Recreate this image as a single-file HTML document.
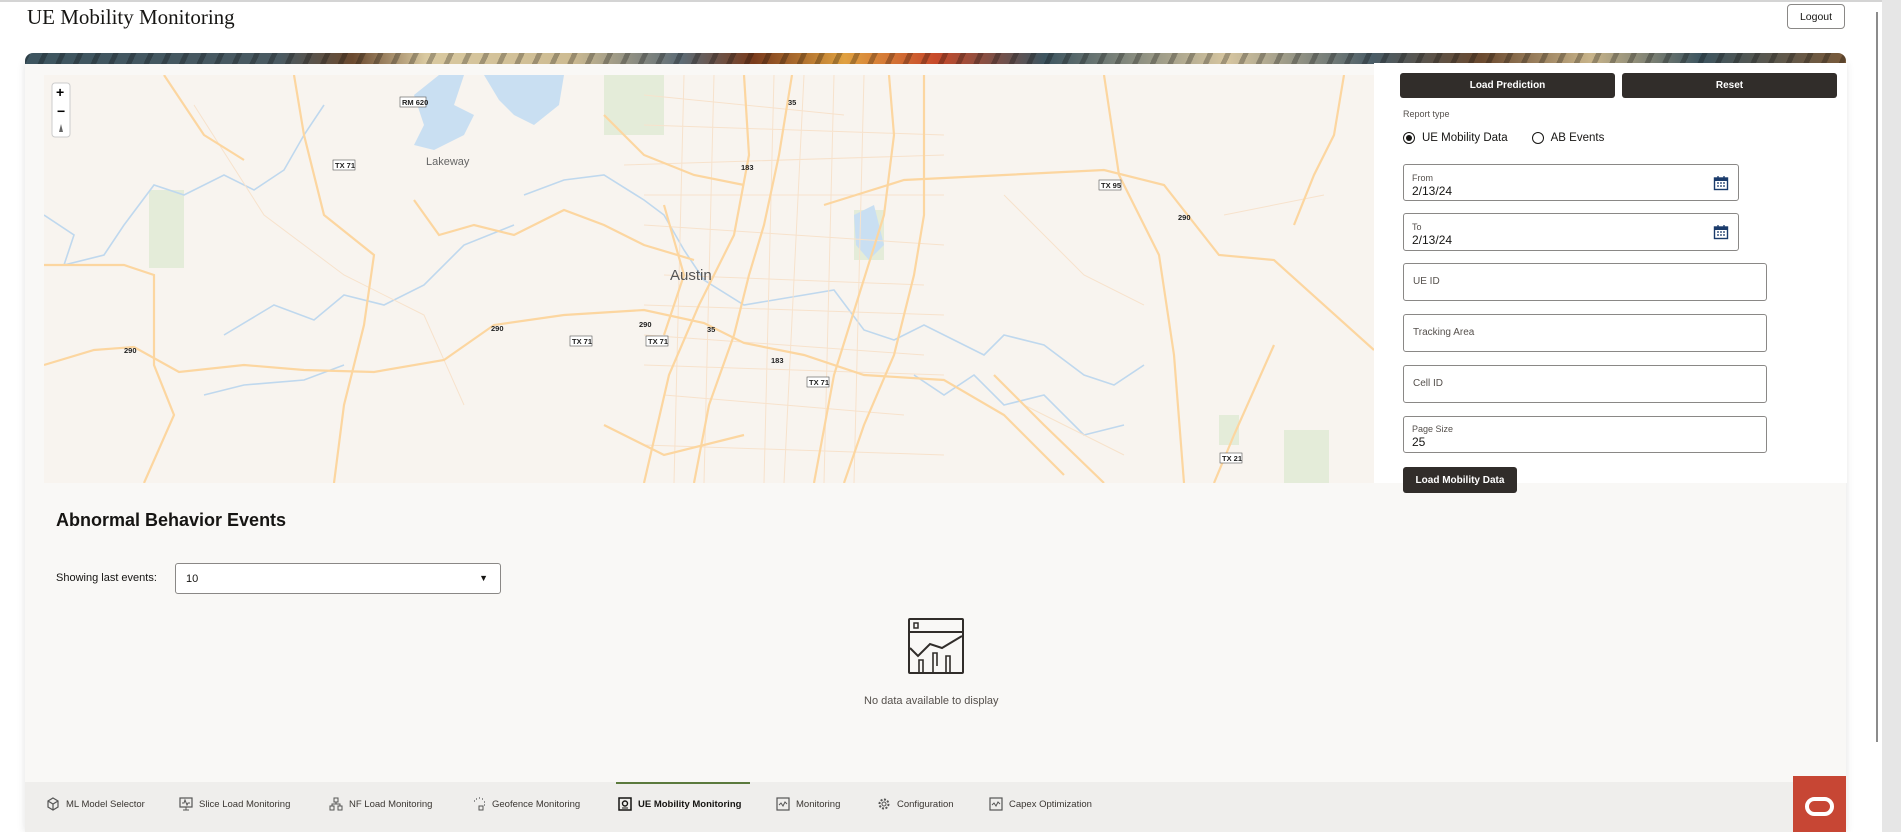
<!DOCTYPE html>
<html><head><meta charset="utf-8">
<style>
*{box-sizing:border-box;margin:0;padding:0}
body{width:1901px;height:832px;overflow:hidden;background:#fff;font-family:"Liberation Sans",sans-serif;position:relative;color:#161513}
.abs{position:absolute}
.title{left:27px;top:5px;font-family:"Liberation Serif",serif;font-size:21px;color:#161513}
.logout{left:1787px;top:4px;width:58px;height:25px;border:1px solid #8a8886;border-radius:4px;font-size:10.5px;display:flex;align-items:center;justify-content:center;background:#fff}
.banner{left:25px;top:53px;width:1821px;height:11px;border-radius:8px 8px 0 0;overflow:hidden;background:linear-gradient(90deg,#3d5560 0,#4a5a62 14%,#6b4a2f 18%,#d9c9a0 22%,#cdbb92 30%,#5d6c76 36%,#7a3b1c 40%,#e0a140 45%,#c84a2a 50%,#3d5560 56%,#d7c6a0 66%,#4a5d67 74%,#6b4a2f 80%,#c8b48a 86%,#3d5560 92%,#7a5a3a 100%)}
.banner:after{content:"";position:absolute;inset:0;background:repeating-linear-gradient(115deg,rgba(0,0,0,.25) 0 5px,transparent 5px 16px)}
.card{left:25px;top:63px;width:1821px;height:769px;background:#f9f8f6;box-shadow:0 0 8px rgba(0,0,0,.12)}
.rp{left:1374px;top:63px;width:473px;height:420px;background:#fff}
.btn{background:#312d2a;color:#fff;font-size:10px;font-weight:bold;display:flex;align-items:center;justify-content:center;border-radius:3px}
.fld{left:1403px;border:1px solid #8a8886;border-radius:3px;background:#fff}
.fld .l{position:absolute;left:8px;font-size:9px;color:#55504c}
.fld .v{position:absolute;left:8px;font-size:12px;color:#161513}
.fld .p{position:absolute;left:9px;top:12px;font-size:10px;color:#55504c}
.nav{left:25px;top:782px;width:1821px;height:50px;background:#efeeec}
.ni{position:absolute;top:797px;font-size:9.5px;color:#3a3632;display:flex;align-items:center;gap:6px}
.ni svg{width:14px;height:14px}
</style></head><body>
<div class="abs" style="left:0;top:0;width:1882px;height:2px;background:#d4d4d4"></div>
<div class="abs" style="left:1882px;top:0;width:19px;height:832px;background:#e6e6e6"></div>
<div class="abs" style="left:1876px;top:12px;width:2px;height:730px;background:#8c8c8c"></div>
<div class="abs title">UE Mobility Monitoring</div>
<div class="abs logout">Logout</div>
<div class="abs card"></div>
<div class="abs banner"></div>
<svg class="abs" style="left:44px;top:75px" width="1330" height="408" viewBox="0 0 1330 408">
<rect width="1330" height="408" fill="#f8f4ef"/>
<g fill="#e4ecd9"><rect x="105" y="115" width="35" height="78"/><rect x="560" y="0" width="60" height="60"/><rect x="810" y="135" width="30" height="50"/><rect x="1240" y="355" width="45" height="53"/><rect x="1175" y="340" width="20" height="30"/></g>
<g fill="#c9dff2"><path d="M370 20 L395 0 L420 0 L410 30 L430 40 L420 60 L390 75 L370 70 L380 50 Z"/><path d="M440 0 L520 0 L515 30 L490 50 L470 40 L455 25 Z"/><path d="M810 140 L830 130 L840 170 L825 185 L812 170 Z"/></g>
<g fill="none" stroke="#bfd8ee" stroke-width="1.6"><path d="M0 140 L30 160 L20 190 L60 180 L80 150 L110 110 L140 120 L180 100 L210 115 L240 95 L260 60 L280 30"/><path d="M480 120 L520 105 L560 100 L600 125 L620 140 L640 175 L660 205 L700 230 L730 225 L760 220 L790 215 L820 255 L850 265 L880 250 L920 270 L940 280 L960 260 L1000 270 L1040 300 L1070 310 L1100 290"/><path d="M180 260 L230 230 L270 245 L300 220 L340 230 L380 210 L420 170 L470 150"/><path d="M160 320 L200 310 L260 305 L300 290"/><path d="M870 300 L900 320 L930 300 L960 330 L1000 320 L1040 360 L1080 350"/></g>
<g fill="none" stroke="#f7e2cc" stroke-width="1"><path d="M600 20 L800 40 M580 90 L900 80 M600 150 L900 170 M620 200 L880 210 M600 260 L880 280 M620 320 L860 340 M760 0 L740 408 M790 0 L780 408 M820 0 L810 408 M640 0 L630 408 M670 0 L660 408 M730 0 L720 408 M600 50 L900 60 M600 120 L900 120 M600 230 L900 240 M600 290 L900 300 M600 370 L900 380"/><path d="M150 30 L220 140 L300 200 L380 240 L420 330 M960 120 L1040 200 L1100 230 M1180 140 L1280 120 M980 330 L1080 380"/></g>
<g fill="none" stroke="#fcd6a0" stroke-width="2.2"><path d="M748 0 L735 80 L720 150 L705 200 L690 260 L665 330 L650 408"/><path d="M700 0 L705 80 L690 160 L655 230 L625 300 L600 408"/><path d="M845 0 L850 60 L840 140 L815 220 L790 300 L770 408"/><path d="M0 290 L50 275 L90 272 L135 297 L200 290 L260 295 L330 297 L400 285 L450 250 L520 240 L600 235 L660 248 L700 268 L760 280 L820 300 L900 305 L960 340 L1020 400"/><path d="M780 130 L860 105 L1060 95 L1120 110 L1175 180 L1230 185 L1330 275"/><path d="M370 125 L395 160 L430 150 L470 160 L520 135 L560 150 L600 170 L650 185"/><path d="M1060 0 L1075 100 L1115 180 L1130 280 L1140 408"/><path d="M1230 270 L1190 360 L1170 408"/><path d="M880 0 L880 140 L870 200 L850 280 L820 350 L800 408"/><path d="M0 190 L80 190 L110 200 L110 290 L130 340 L100 408"/><path d="M120 0 L160 60 L200 85"/><path d="M250 0 L260 60 L280 140 L330 180 L320 250 L300 330 L290 408"/><path d="M1300 0 L1290 60 L1270 100 L1250 150"/><path d="M950 300 L1000 350 L1060 408"/><path d="M560 40 L600 80 L650 100 L700 110 M560 350 L620 380 L700 360 M620 130 L640 200 L620 260"/></g>
<g font-size="7.5" font-weight="bold" fill="#222"><rect x="356" y="22" width="26" height="10" fill="#fff" stroke="#555" stroke-width=".6"/><text x="358" y="30">RM 620</text>
<rect x="289" y="85" width="22" height="10" fill="#fff" stroke="#555" stroke-width=".6"/><text x="291" y="93">TX 71</text>
<rect x="1055" y="105" width="22" height="10" fill="#fff" stroke="#555" stroke-width=".6"/><text x="1057" y="113">TX 95</text>
<rect x="526" y="261" width="22" height="10" fill="#fff" stroke="#555" stroke-width=".6"/><text x="528" y="269">TX 71</text>
<rect x="602" y="261" width="22" height="10" fill="#fff" stroke="#555" stroke-width=".6"/><text x="604" y="269">TX 71</text>
<rect x="763" y="302" width="22" height="10" fill="#fff" stroke="#555" stroke-width=".6"/><text x="765" y="310">TX 71</text>
<rect x="1176" y="378" width="22" height="10" fill="#fff" stroke="#555" stroke-width=".6"/><text x="1178" y="386">TX 21</text>
<text x="80" y="278">290</text><text x="447" y="256">290</text><text x="595" y="252">290</text><text x="1134" y="145">290</text><text x="697" y="95">183</text><text x="727" y="288">183</text><text x="744" y="30">35</text><text x="663" y="257">35</text></g>
<text x="382" y="90" font-size="11" fill="#666">Lakeway</text>
<text x="626" y="205" font-size="15" fill="#555">Austin</text>
<g><rect x="8" y="8" width="18" height="54" rx="3" fill="#fff" stroke="#ccc"/><text x="12" y="22" font-size="14" font-weight="bold">+</text><text x="13" y="41" font-size="14" font-weight="bold">−</text><path d="M17 49 L15 57 L19 57 Z" fill="#666"/></g>
</svg>
<div class="abs rp"></div>
<div class="abs btn" style="left:1400px;top:73px;width:215px;height:25px">Load Prediction</div>
<div class="abs btn" style="left:1622px;top:73px;width:215px;height:25px">Reset</div>
<div class="abs" style="left:1403px;top:109px;font-size:9px;color:#55504c">Report type</div>
<div class="abs" style="left:1403px;top:132px;display:flex;align-items:center;font-size:11.5px">
<span style="width:12px;height:12px;border:1px solid #161513;border-radius:50%;display:inline-flex;align-items:center;justify-content:center;margin-right:7px"><span style="width:6px;height:6px;background:#161513;border-radius:50%"></span></span>UE Mobility Data
<span style="width:12px;height:12px;border:1px solid #161513;border-radius:50%;display:inline-block;margin:0 7px 0 24px"></span>AB Events</div>
<div class="abs fld" style="top:164px;width:336px;height:37px"><span class="l" style="top:8px">From</span><span class="v" style="top:19px">2/13/24</span>
<svg style="position:absolute;right:9px;top:10px" width="16" height="16" viewBox="0 0 16 16"><rect x="1.5" y="3" width="13" height="11.5" fill="none" stroke="#1a3b6b" stroke-width="1.4"/><rect x="1.5" y="3" width="13" height="3" fill="#1a3b6b"/><path d="M4 8h2M7 8h2M10 8h2M4 11h2M7 11h2M10 11h2" stroke="#1a3b6b" stroke-width="1.3"/><path d="M5 1v3M11 1v3" stroke="#1a3b6b" stroke-width="1.3"/></svg></div>
<div class="abs fld" style="top:213px;width:336px;height:38px"><span class="l" style="top:8px">To</span><span class="v" style="top:19px">2/13/24</span>
<svg style="position:absolute;right:9px;top:10px" width="16" height="16" viewBox="0 0 16 16"><rect x="1.5" y="3" width="13" height="11.5" fill="none" stroke="#1a3b6b" stroke-width="1.4"/><rect x="1.5" y="3" width="13" height="3" fill="#1a3b6b"/><path d="M4 8h2M7 8h2M10 8h2M4 11h2M7 11h2M10 11h2" stroke="#1a3b6b" stroke-width="1.3"/><path d="M5 1v3M11 1v3" stroke="#1a3b6b" stroke-width="1.3"/></svg></div>
<div class="abs fld" style="top:263px;width:364px;height:38px"><span class="p">UE ID</span></div>
<div class="abs fld" style="top:314px;width:364px;height:38px"><span class="p">Tracking Area</span></div>
<div class="abs fld" style="top:365px;width:364px;height:38px"><span class="p">Cell ID</span></div>
<div class="abs fld" style="top:416px;width:364px;height:37px"><span class="l" style="top:7px">Page Size</span><span class="v" style="top:18px">25</span></div>
<div class="abs btn" style="left:1403px;top:467px;width:114px;height:26px;font-size:10px">Load Mobility Data</div>
<div class="abs" style="left:56px;top:510px;font-size:18px;font-weight:bold">Abnormal Behavior Events</div>
<div class="abs" style="left:56px;top:572px;font-size:11px">Showing last events:</div>
<div class="abs" style="left:175px;top:563px;width:326px;height:31px;background:#fff;border:1px solid #8a8886;border-radius:3px"><span style="position:absolute;left:10px;top:9px;font-size:11px">10</span><span style="position:absolute;right:12px;top:9px;font-size:9px">▼</span></div>
<svg class="abs" style="left:908px;top:618px" width="56" height="56" viewBox="0 0 56 56"><rect x="1" y="1" width="54" height="54" rx="1" fill="none" stroke="#312d2a" stroke-width="2"/><line x1="1" y1="14" x2="55" y2="14" stroke="#312d2a" stroke-width="2"/><rect x="6" y="5" width="4" height="5" fill="none" stroke="#312d2a" stroke-width="1.5"/><path d="M2 30 L10 38 L22 26 L34 30 L54 18" fill="none" stroke="#312d2a" stroke-width="2"/><path d="M11 55V42h4v13M25 55V35h4v13M38 55V38h4v17" fill="none" stroke="#312d2a" stroke-width="1.6"/></svg>
<div class="abs" style="left:864px;top:695px;font-size:11px;color:#55504c">No data available to display</div>
<div class="abs nav"></div>
<div class="abs" style="left:616px;top:782px;width:134px;height:2px;background:#5b7a3d"></div>
<div class="ni" style="left:46px"><svg viewBox="0 0 14 14"><path d="M7 1L12 4V10L7 13L2 10V4Z M2 4L7 7L12 4 M7 7V13" fill="none" stroke="#555" stroke-width="1.2"/></svg>ML Model Selector</div>
<div class="ni" style="left:179px"><svg viewBox="0 0 14 14"><rect x="1" y="1" width="12" height="9" fill="none" stroke="#555" stroke-width="1.2"/><path d="M3 6h2l1-3 2 5 1-2h2M7 10v3M4 13h6" fill="none" stroke="#555"/></svg>Slice Load Monitoring</div>
<div class="ni" style="left:329px"><svg viewBox="0 0 14 14"><rect x="5" y="1" width="4" height="4" fill="none" stroke="#555"/><rect x="1" y="9" width="4" height="4" fill="none" stroke="#555"/><rect x="9" y="9" width="4" height="4" fill="none" stroke="#555"/><path d="M7 5v2M3 9V7h8v2" fill="none" stroke="#555"/></svg>NF Load Monitoring</div>
<div class="ni" style="left:472px"><svg viewBox="0 0 14 14"><path d="M2 4h1M4 2h1M7 1h1M10 2h1M12 5h1M12 8h1" stroke="#555" stroke-width="1.2"/><rect x="7" y="9" width="4" height="4" fill="none" stroke="#555"/></svg>Geofence Monitoring</div>
<div class="ni" style="left:618px;color:#161513;font-weight:bold"><svg viewBox="0 0 14 14"><rect x="1" y="1" width="12" height="12" fill="none" stroke="#161513" stroke-width="1.5"/><circle cx="7" cy="6.5" r="2.5" fill="none" stroke="#161513" stroke-width="1.4"/><path d="M4 11h6" stroke="#161513"/></svg>UE Mobility Monitoring</div>
<div class="ni" style="left:776px"><svg viewBox="0 0 14 14"><rect x="1" y="1" width="12" height="12" fill="none" stroke="#555" stroke-width="1.2"/><path d="M3 8l2-2 2 3 2-4 2 2" fill="none" stroke="#555"/></svg>Monitoring</div>
<div class="ni" style="left:877px"><svg viewBox="0 0 14 14"><circle cx="7" cy="7" r="4.5" fill="none" stroke="#555" stroke-width="2" stroke-dasharray="2 1.5"/><circle cx="7" cy="7" r="2" fill="none" stroke="#555"/></svg>Configuration</div>
<div class="ni" style="left:989px"><svg viewBox="0 0 14 14"><rect x="1" y="1" width="12" height="12" fill="none" stroke="#555" stroke-width="1.2"/><path d="M3 8l2-2 2 3 2-4 2 2" fill="none" stroke="#555"/></svg>Capex Optimization</div>
<div class="abs" style="left:1793px;top:776px;width:53px;height:56px;background:#c74634"></div>
<div class="abs" style="left:1805px;top:797px;width:29px;height:19px;border:4px solid #fff;border-radius:10px"></div>
</body></html>
